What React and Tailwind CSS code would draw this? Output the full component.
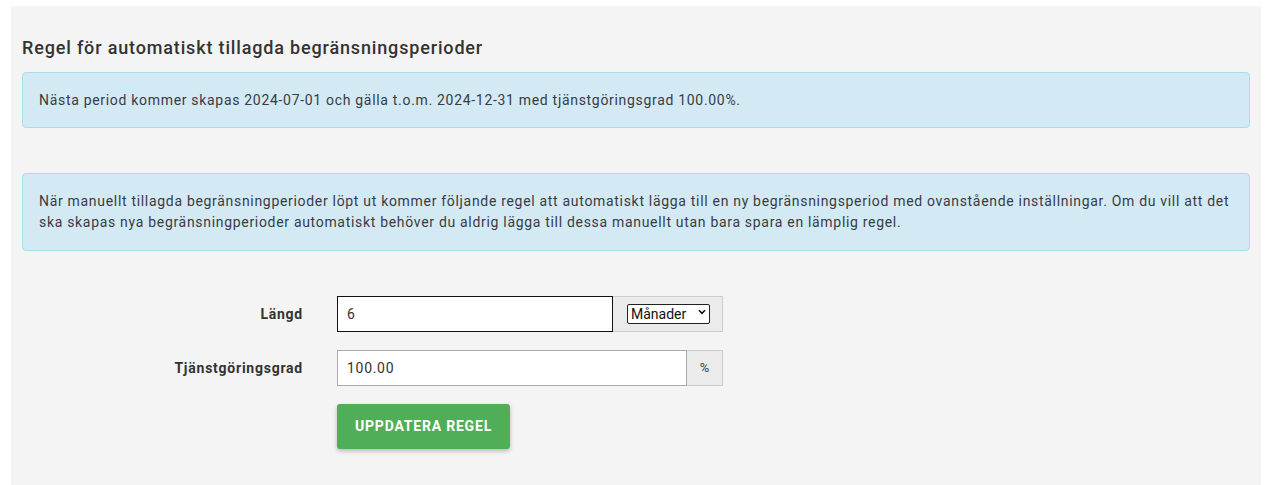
export default function App() {
  return (
    <div className="min-h-screen bg-white pl-[11px] pr-[7px] pt-[6px] text-[#333] font-['Roboto',sans-serif]">
      <div className="bg-[#f4f4f4] px-[11px] pt-[29px] pb-[36px]">
        <h2 className="text-[18px] leading-[26px] font-medium tracking-[0.84px] text-[#333]">
          Regel för automatiskt tillagda begränsningsperioder
        </h2>

        {/* Next period info */}
        <div className="mt-[11px] rounded-[4px] border border-[#a9deeb] bg-[#d3eaf4] px-4 pt-[17px] pb-[16px] text-[14px] leading-[21px] tracking-[0.69px] text-[#3a3a44]">
          Nästa period kommer skapas 2024-07-01 och gälla t.o.m. 2024-12-31 med tjänstgöringsgrad 100.00%.
        </div>

        <div className="mt-[45px] rounded-[4px] border border-[#a9deeb] bg-[#d3eaf4] px-4 py-[17px] text-[14px] leading-[21px] tracking-[0.69px] text-[#3a3a44]">
          När manuellt tillagda begränsningperioder löpt ut kommer följande regel att automatiskt lägga till en ny begränsningsperiod med ovanstående inställningar. Om du vill att det ska skapas nya begränsningperioder automatiskt behöver du aldrig lägga till dessa manuellt utan bara spara en lämplig regel.
        </div>

        {/* Form */}
        <div className="mt-[45px] flex flex-col gap-[18px]">
          <div className="flex items-center">
            <label className="w-[281px] text-right text-[14px] font-bold tracking-[0.76px]">Längd</label>
            <div className="ml-[34px] flex h-[36px] w-[386px]">
              <input
                defaultValue="6"
                className="h-full w-[276px] border border-[#111] bg-white px-[9px] text-[14px] tracking-[0.7px] text-[#333] outline-none"
              />
              <div className="flex flex-1 items-center border border-l-0 border-[#ccc] bg-[#ebebeb] pl-[14px]">
                <div className="relative">
                  <select className="h-[20px] w-[83px] appearance-none rounded-[2px] border border-[#222] bg-white pl-[3px] text-[14px] leading-[18px] text-[#111] outline-none">
                    <option>Månader</option>
                  </select>
                  <svg className="pointer-events-none absolute right-[4px] top-[7px]" width="8" height="6" viewBox="0 0 8 6">
                    <path d="M1 1.2 4 4.3 7 1.2" fill="none" stroke="#111" strokeWidth="1.6" />
                  </svg>
                </div>
              </div>
            </div>
          </div>

          <div className="flex items-center">
            <label className="w-[281px] text-right text-[14px] font-bold tracking-[0.76px]">Tjänstgöringsgrad</label>
            <div className="ml-[34px] flex h-[36px] w-[386px]">
              <input
                defaultValue="100.00"
                className="h-full w-[350px] border border-[#aaa] bg-white px-[9px] text-[14px] tracking-[0.7px] text-[#333] outline-none"
              />
              <div className="flex flex-1 items-center justify-center border border-l-0 border-[#ccc] bg-[#ebebeb] text-[13px] text-[#444]">
                %
              </div>
            </div>
          </div>

          <div className="flex">
            <button className="ml-[315px] h-[45px] w-[173px] rounded-[3px] bg-[#4fae57] text-[14px] font-bold uppercase tracking-[0.8px] text-white shadow-[0_2px_4px_rgba(0,0,0,0.25)]">
              Uppdatera regel
            </button>
          </div>
        </div>
      </div>
    </div>
  );
}
